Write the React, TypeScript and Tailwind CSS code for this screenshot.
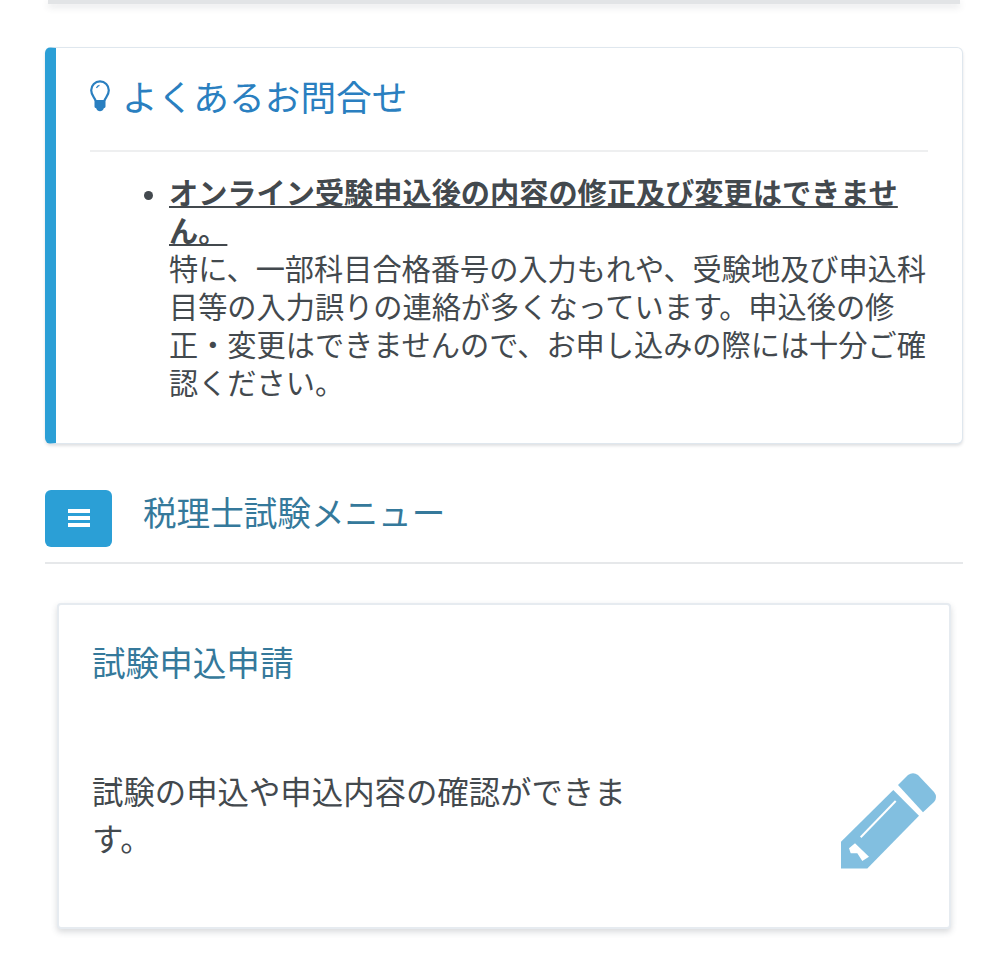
const jpFont = "font-['Noto_Sans_CJK_JP','Noto_Sans',sans-serif]";

function BulbIcon() {
  return (
    <svg width="20" height="32" viewBox="0 0 20 32" className="shrink-0">
      <path
        d="M5.5 20.5C4.8 17.5 1.2 15.5 1.2 10.2A8.8 8.8 0 0 1 18.8 10.2C18.8 15.5 15.2 17.5 14.5 20.5"
        fill="none"
        stroke="#2a7fc0"
        strokeWidth="2.2"
      />
      <path d="M6.5 8A4.2 4.2 0 0 1 9.5 5.4" fill="none" stroke="#2a7fc0" strokeWidth="1.2" />
      <path d="M4.5 20H15.5V26.5C15.5 27.5 14.5 28 13.8 28.2C13.4 30.2 11.6 31.2 10 31.2C8.4 31.2 6.6 30.2 6.2 28.2C5.5 28 4.5 27.5 4.5 26.5Z" fill="#2a7fc0" />
    </svg>
  );
}

function PencilIcon() {
  return (
    <svg width="96" height="96" viewBox="0 0 96 96" className="shrink-0">
      <path d="M57 12L67 2Q72 -1.5 77 2L93 19Q97 24 93 29L82 39.3Z" fill="#82bfe0" />
      <path d="M52.3 17L78 42.7L26.3 95.5H0V68.7Z" fill="#82bfe0" />
      <path d="M54.7 28L19.7 64.3" stroke="#fff" strokeWidth="2" fill="none" />
      <path d="M8 75.3L14 70.3L28 83.7L21.3 88L16.3 80.3H9.7Z" fill="#fff" />
    </svg>
  );
}

export default function App() {
  return (
    <div className={`${jpFont} min-h-[955px] bg-white px-[45px] text-[#43494e]`}>
      {/* 上のカード（下端だけ見えている） */}
      <div className="mx-[3px] h-[4px] bg-[#e2e4e6] shadow-[0_3px_7px_rgba(60,70,80,0.16)]" />

      <section className="mt-[43px] h-[397px] rounded-[6px] border border-l-[11px] border-[#dfe7ee] border-l-[#2b9fd6] bg-white px-[34px] shadow-[0_2px_3px_rgba(60,70,80,0.16)]">
        <h2 className="flex h-[104px] items-center gap-[12px] border-b-2 border-[#eeeff0] pb-[6px] text-[35.7px] text-[#2a7fc0]">
          <BulbIcon />
          <span>よくあるお問合せ</span>
        </h2>
        <ul className="mt-[20px] list-disc pl-[79px] text-[29.2px] leading-[38px] marker:text-[24px]">
          <li>
            <strong className="font-bold underline decoration-2 underline-offset-[2px]">
              オンライン受験申込後の内容の修正及び変更はできません。
            </strong>
            <br />
            特に、一部科目合格番号の入力もれや、受験地及び申込科目等の入力誤りの連絡が多くなっています。申込後の修正・変更はできませんので、お申し込みの際には十分ご確認ください。
          </li>
        </ul>
      </section>

      <div className="mt-[46px] flex h-[74px] items-start gap-[31px] border-b-2 border-[#e6e8ea]">
        <button type="button" className="flex h-[57px] w-[67px] flex-col items-center justify-center gap-[3px] rounded-[6px] bg-[#2b9fd6] pb-[2px]">
          <span className="h-[4px] w-[22px] bg-white" />
          <span className="h-[4px] w-[22px] bg-white" />
          <span className="h-[4px] w-[22px] bg-white" />
        </button>
        <h2 className="-mt-[2px] text-[33.6px] leading-[48px] text-[#35799b]">税理士試験メニュー</h2>
      </div>

      <div className="mx-3 mt-[39px] h-[326px] rounded-[4px] border-2 border-[#e6ebf0] bg-white pl-[33px] pr-[12px] shadow-[0_3px_6px_rgba(60,70,80,0.2)]">
        <h3 className="pt-[33px] text-[33.6px] leading-[48px] text-[#35799b]">試験申込申請</h3>
        <div className="mt-[61px] flex items-start justify-between">
          <p className="mt-[20px] w-[540px] text-[31.4px] leading-[47px]">試験の申込や申込内容の確認ができます。</p>
          <div className="mt-[26px]">
            <PencilIcon />
          </div>
        </div>
      </div>
    </div>
  );
}
